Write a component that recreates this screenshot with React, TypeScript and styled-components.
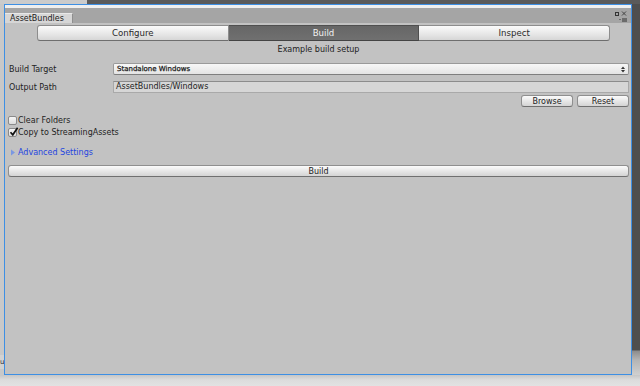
import React from "react";
import styled, { createGlobalStyle } from "styled-components";

const GlobalStyle = createGlobalStyle`
  html, body {
    margin: 0;
    padding: 0;
    background: #d4d4d4;
  }
  body {
    font-family: "DejaVu Sans", Verdana, sans-serif;
    font-size: 8px;
    color: #222;
  }
`;

const Page = styled.div`
  width: 640px;
  height: 386px;
  display: grid;
  grid-template-columns: 4px 628px 8px;
  grid-template-rows: 4px 371px 11px;
  overflow: hidden;
`;

const TopStrip = styled.div`
  grid-column: 1 / 4;
  background: linear-gradient(to right, #cbcbcb 87px, #5a5a5a 87px);
`;

const LeftGutter = styled.div`
  background: #c8c8c8;
  display: flex;
  flex-direction: column;
  justify-content: flex-end;
  overflow: hidden;

  span {
    display: block;
    height: 14px;
    margin-bottom: 6px;
    background: #d2d2d2;
    color: #333;
    line-height: 14px;
    font-size: 7px;
    padding-left: 0;
  }
`;

const RightGutter = styled.div`
  background: linear-gradient(
    to bottom,
    #4e4e4e 0,
    #4e4e4e 346px,
    #8c8c8c 347px,
    #b4b4b4 356px,
    #d0d0d0 371px
  );
`;

const BottomStrip = styled.div`
  grid-column: 1 / 4;
  background: linear-gradient(to bottom, #c6c6c6, #dcdcdc 5px, #e2e2e2);
`;

const Window = styled.div`
  border: 1px solid #3d8fe4;
  display: flex;
  flex-direction: column;
  background: #c2c2c2;
  min-height: 0;
`;

const TopHighlight = styled.div`
  height: 3px;
  background: #efefef;
`;

const TabBar = styled.div`
  height: 15px;
  background: #a5a5a5;
  display: flex;
  align-items: flex-end;
  justify-content: space-between;
  position: relative;
`;

const Tab = styled.div`
  width: 68px;
  height: 10px;
  background: #d6d6d6;
  border-top: 1px solid #e8e8e8;
  border-right: 1px solid #8e8e8e;
  box-sizing: border-box;
  padding-left: 5px;
  line-height: 9px;
  color: #222;
`;

const WindowControls = styled.div`
  position: absolute;
  right: 2px;
  top: 2px;
  width: 16px;
  height: 13px;
`;

const Content = styled.div`
  flex: 1;
  display: flex;
  flex-direction: column;
  padding: 0 2px 0 3px;
`;

const Toolbar = styled.div`
  display: flex;
  margin: 2px 0 0 29px;
  width: 573px;
  height: 16px;
`;

const ToolbarButton = styled.div<{ $active?: boolean; $pos: "left" | "mid" | "right" }>`
  flex: 1;
  display: flex;
  align-items: center;
  justify-content: center;
  font-size: 8.6px;
  box-sizing: border-box;
  border: 1px solid ${(p) => (p.$active ? "#4f4f4f" : "#8d8d8d")};
  border-bottom-color: ${(p) => (p.$active ? "#444" : "#6e6e6e")};
  border-left-width: ${(p) => (p.$pos === "left" ? "1px" : "0")};
  border-radius: ${(p) =>
    p.$pos === "left" ? "3px 0 0 3px" : p.$pos === "right" ? "0 3px 3px 0" : "0"};
  background: ${(p) =>
    p.$active
      ? "linear-gradient(#666, #707070)"
      : "linear-gradient(#fbfbfb, #e6e6e6 60%, #d6d6d6)"};
  color: ${(p) => (p.$active ? "#f2f2f2" : "#2a2a2a")};
`;

const Subtitle = styled.div`
  margin-top: 3px;
  height: 12px;
  line-height: 12px;
  text-align: center;
`;

const FieldRow = styled.div<{ $gap: number }>`
  display: flex;
  align-items: center;
  margin-top: ${(p) => p.$gap}px;
  height: 12px;
`;

const Label = styled.div`
  width: 104px;
  margin-left: 1px;
`;

const Dropdown = styled.div`
  flex: 1;
  height: 12px;
  box-sizing: border-box;
  border: 1px solid #9a9a9a;
  border-bottom-color: #7f7f7f;
  border-radius: 2px;
  background: linear-gradient(#f7f7f7, #e4e4e4);
  display: flex;
  align-items: center;
  justify-content: space-between;
  padding: 0 3px;
  font-size: 7px;
  color: #1a1a1a;
  -webkit-text-stroke: 0.25px #1a1a1a;
`;

const TextField = styled.div`
  flex: 1;
  height: 12px;
  box-sizing: border-box;
  border: 1px solid #a9a9a9;
  border-top-color: #8c8c8c;
  background: #d6d6d6;
  padding-left: 2px;
  line-height: 10px;
`;

const ButtonRow = styled.div`
  display: flex;
  justify-content: flex-end;
  gap: 4px;
  margin-top: 2px;
`;

const SmallButton = styled.div`
  width: 52px;
  height: 12px;
  box-sizing: border-box;
  border: 1px solid #8f8f8f;
  border-bottom-color: #6f6f6f;
  border-radius: 3px;
  background: linear-gradient(#fbfbfb, #e3e3e3 60%, #d4d4d4);
  display: flex;
  align-items: center;
  justify-content: center;
`;

const CheckRow = styled.div<{ $gap: number }>`
  display: flex;
  align-items: center;
  gap: 1px;
  height: 12px;
  margin-top: ${(p) => p.$gap}px;
`;

const CheckBox = styled.div`
  width: 9px;
  height: 9px;
  box-sizing: border-box;
  border: 1px solid #8a8a8a;
  border-radius: 2px;
  background: linear-gradient(#f6f6f6, #dcdcdc);
  position: relative;

  svg {
    position: absolute;
    left: 0;
    top: -2px;
  }
`;

const Foldout = styled.div`
  display: flex;
  align-items: center;
  gap: 3px;
  height: 12px;
  margin-top: 8px;
  padding-left: 3px;
  color: #1f45e0;
`;

const WideButton = styled(SmallButton)`
  width: auto;
  margin-top: 7px;
`;

const Check = () => (
  <svg width="10" height="10" viewBox="0 0 10 10">
    <path d="M1.5 5.2 L3.8 7.8 L8.6 0.8" fill="none" stroke="#111" strokeWidth="1.7" />
  </svg>
);

const App = () => {
  return (
    <>
      <GlobalStyle />
      <Page>
        <TopStrip />
        <LeftGutter>
          <span>u</span>
        </LeftGutter>
        <Window>
          <TopHighlight />
          <TabBar>
            <Tab>AssetBundles</Tab>
            <WindowControls>
              <svg width="16" height="13" viewBox="0 0 16 13">
                <rect x="2.5" y="2.5" width="3" height="3" fill="none" stroke="#333" />
                <path d="M9 1.5 L13 5.5 M13 1.5 L9 5.5" stroke="#444" strokeWidth="1" />
                <path d="M6 9 L8 9 L7 10 Z" fill="#333" />
                <rect x="9" y="8.5" width="5" height="1" fill="#333" />
                <rect x="9" y="10.5" width="5" height="1" fill="#333" />
              </svg>
            </WindowControls>
          </TabBar>
          <Content>
            <Toolbar>
              <ToolbarButton $pos="left">Configure</ToolbarButton>
              <ToolbarButton $pos="mid" $active>
                Build
              </ToolbarButton>
              <ToolbarButton $pos="right">Inspect</ToolbarButton>
            </Toolbar>
            <Subtitle>Example build setup</Subtitle>
            <FieldRow $gap={7}>
              <Label>Build Target</Label>
              <Dropdown>
                <span>Standalone Windows</span>
                <svg width="4" height="7" viewBox="0 0 4 7">
                  <path d="M0 3 L2 0.5 L4 3 Z M0 4 L2 6.5 L4 4 Z" fill="#333" />
                </svg>
              </Dropdown>
            </FieldRow>
            <FieldRow $gap={6}>
              <Label>Output Path</Label>
              <TextField>AssetBundles/Windows</TextField>
            </FieldRow>
            <ButtonRow>
              <SmallButton>Browse</SmallButton>
              <SmallButton>Reset</SmallButton>
            </ButtonRow>
            <CheckRow $gap={7}>
              <CheckBox />
              <span>Clear Folders</span>
            </CheckRow>
            <CheckRow $gap={0}>
              <CheckBox>
                <Check />
              </CheckBox>
              <span>Copy to StreamingAssets</span>
            </CheckRow>
            <Foldout>
              <svg width="4" height="7" viewBox="0 0 4 7">
                <path d="M0 0.5 L4 3.5 L0 6.5 Z" fill="#7a98e2" />
              </svg>
              <span>Advanced Settings</span>
            </Foldout>
            <WideButton>Build</WideButton>
          </Content>
        </Window>
        <RightGutter />
        <BottomStrip />
      </Page>
    </>
  );
};

export default App;
